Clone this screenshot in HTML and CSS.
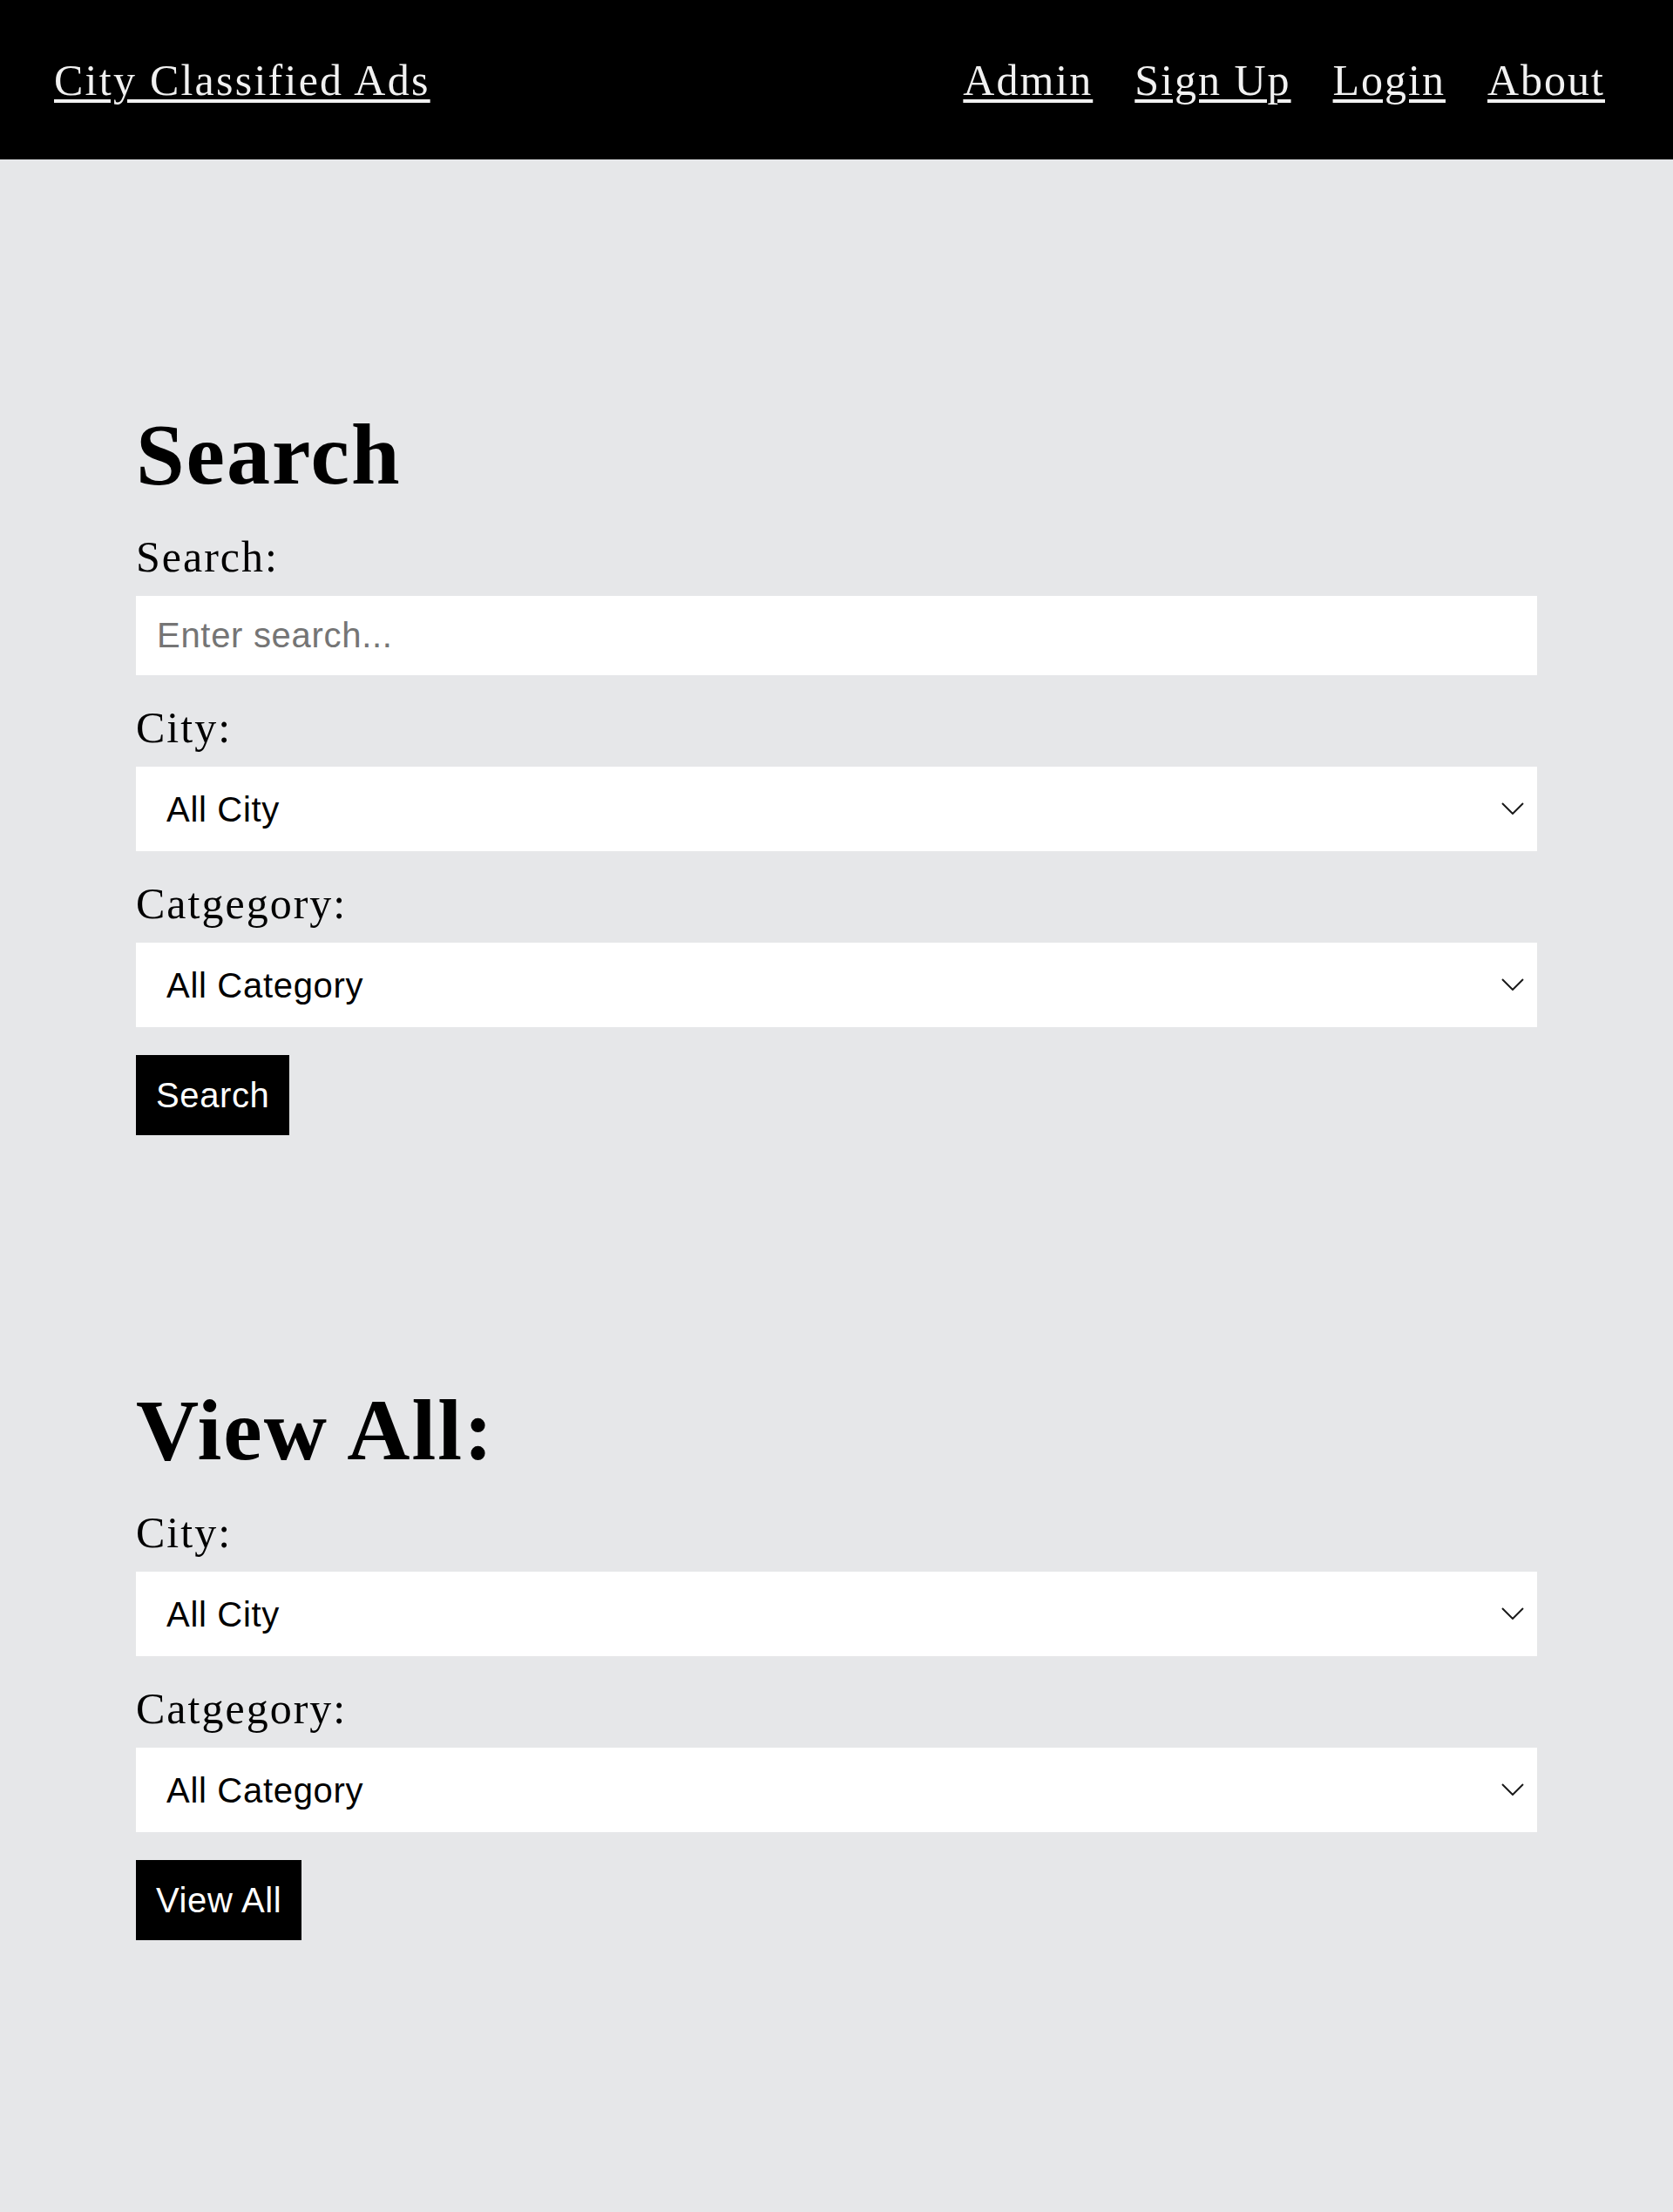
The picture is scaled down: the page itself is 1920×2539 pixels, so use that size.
FILE: index.html
```html
<!DOCTYPE html>
<html lang="en">
<head>
<meta charset="utf-8">
<title>City Classified Ads</title>
<link rel="stylesheet" href="styles.css">
</head>
<body>
<header class="topbar">
  <a class="brand" href="#">City Classified Ads</a>
  <nav class="nav">
    <a class="nav-link" href="#">Admin</a>
    <a class="nav-link" href="#">Sign Up</a>
    <a class="nav-link" href="#">Login</a>
    <a class="nav-link" href="#">About</a>
  </nav>
</header>
<main class="main">
  <section class="panel">
    <h1 class="panel-title">Search</h1>
    <form class="form">
      <label class="field-label" for="q">Search:</label>
      <input class="field-input" id="q" type="text" placeholder="Enter search...">
      <label class="field-label" for="city1">City:</label>
      <div class="select-wrap">
        <select class="field-select" id="city1"><option>All City</option></select>
        <svg class="chevron" viewBox="0 0 26 14" width="26" height="14"><polyline points="1,1 13,13 25,1" fill="none" stroke="#1a1a1a" stroke-width="2"/></svg>
      </div>
      <label class="field-label" for="cat1">Catgegory:</label>
      <div class="select-wrap">
        <select class="field-select" id="cat1"><option>All Category</option></select>
        <svg class="chevron" viewBox="0 0 26 14" width="26" height="14"><polyline points="1,1 13,13 25,1" fill="none" stroke="#1a1a1a" stroke-width="2"/></svg>
      </div>
      <button class="btn" type="button">Search</button>
    </form>
  </section>
  <section class="panel">
    <h1 class="panel-title">View All:</h1>
    <form class="form">
      <label class="field-label" for="city2">City:</label>
      <div class="select-wrap">
        <select class="field-select" id="city2"><option>All City</option></select>
        <svg class="chevron" viewBox="0 0 26 14" width="26" height="14"><polyline points="1,1 13,13 25,1" fill="none" stroke="#1a1a1a" stroke-width="2"/></svg>
      </div>
      <label class="field-label" for="cat2">Catgegory:</label>
      <div class="select-wrap">
        <select class="field-select" id="cat2"><option>All Category</option></select>
        <svg class="chevron" viewBox="0 0 26 14" width="26" height="14"><polyline points="1,1 13,13 25,1" fill="none" stroke="#1a1a1a" stroke-width="2"/></svg>
      </div>
      <button class="btn" type="button">View All</button>
    </form>
  </section>
</main>
</body>
</html>
```
FILE: styles.css
```css
html, body {
  margin: 0;
  padding: 0;
}
body {
  background: #e6e7e9;
  font-family: "Liberation Serif", "Times New Roman", serif;
  color: #000;
}
.topbar {
  background: #000;
  height: 183px;
  display: flex;
  align-items: center;
  justify-content: space-between;
  padding: 0 78px 0 62px;
}
.brand,
.nav-link {
  color: #f1f1f1;
  font-size: 50px;
  line-height: 60px;
  letter-spacing: 2px;
  text-decoration: underline;
  text-decoration-thickness: 4px;
  text-underline-offset: 5px;
}
.brand {
  letter-spacing: 2.25px;
}
.nav {
  display: flex;
  gap: 48px;
}
.main {
  padding: 0 156px;
}
.panel {
  padding-top: 281px;
}
.panel-title {
  margin: 0;
  font-size: 100px;
  line-height: 115px;
  font-weight: bold;
  letter-spacing: 2px;
}
.form {
  display: flex;
  flex-direction: column;
  align-items: flex-start;
  margin: 0;
}
.field-label {
  display: block;
  margin-top: 30px;
  font-size: 50px;
  line-height: 60px;
  letter-spacing: 2px;
}
.field-input,
.select-wrap {
  margin-top: 15px;
  width: 100%;
}
.field-input {
  box-sizing: border-box;
  height: 91px;
  border: 0;
  outline: none;
  padding: 0 24px;
  background: #fff;
  font-family: "Liberation Sans", Arial, sans-serif;
  font-size: 40px;
  letter-spacing: 0.7px;
  color: #000;
}
.field-input::placeholder {
  color: #757575;
}
.select-wrap {
  position: relative;
}
.field-select {
  display: block;
  box-sizing: border-box;
  width: 100%;
  height: 97px;
  border: 0;
  border-radius: 0;
  outline: none;
  -webkit-appearance: none;
  appearance: none;
  background: #fff;
  padding: 0 60px 0 35px;
  font-family: "Liberation Sans", Arial, sans-serif;
  font-size: 40px;
  letter-spacing: 0.7px;
  color: #000;
}
.chevron {
  position: absolute;
  right: 15px;
  top: 41px;
  pointer-events: none;
}
.btn {
  margin-top: 32px;
  height: 92px;
  padding: 0 23px;
  border: 0;
  border-radius: 0;
  background: #000;
  color: #fff;
  font-family: "Liberation Sans", Arial, sans-serif;
  font-size: 40px;
  letter-spacing: 0.6px;
  cursor: pointer;
}
```
